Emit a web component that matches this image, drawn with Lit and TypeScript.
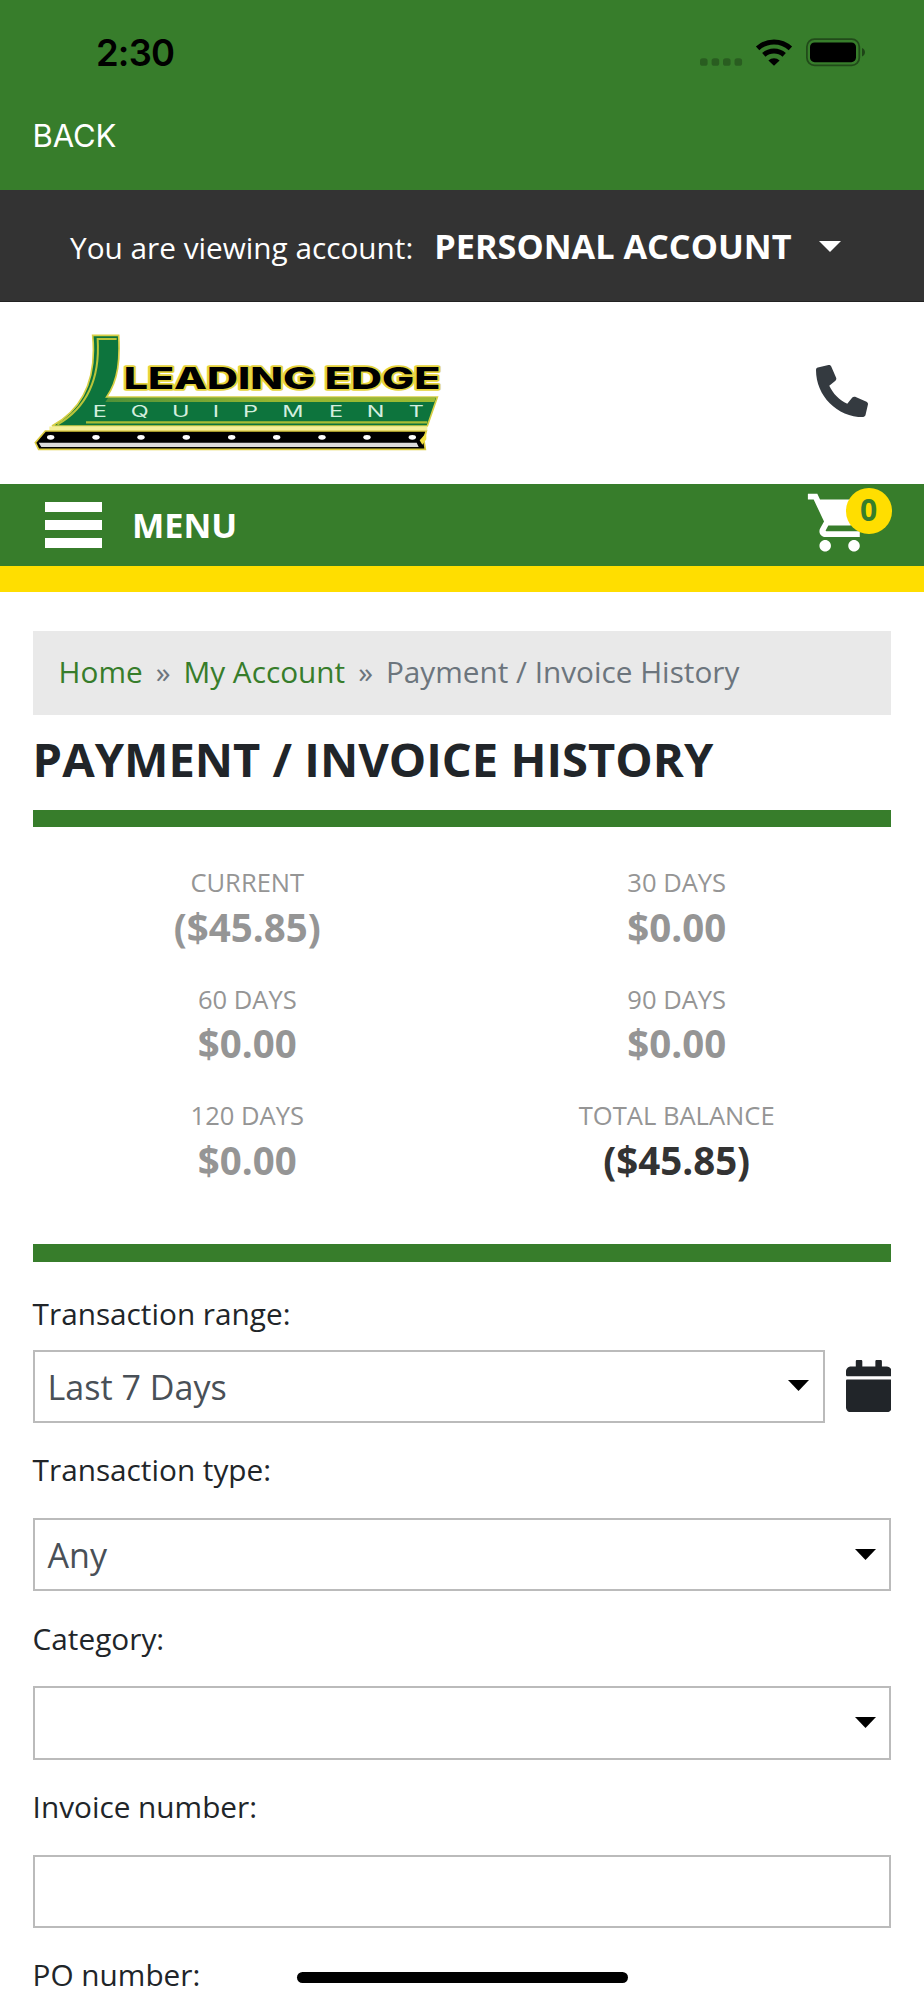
import { LitElement, html, css, svg } from "lit";
import { customElement, property } from "lit/decorators.js";

const SANS = css`"Open Sans", "Noto Sans", sans-serif`;

@customElement("status-bar")
class StatusBar extends LitElement {
  static styles = css`
    :host { display: block; background: #377d2b; height: 190px; font-family: "Inter", "Liberation Sans", sans-serif; }
    .row { display: flex; justify-content: space-between; align-items: flex-start; padding: 30px 58px 0 96px; height: 74px; box-sizing: border-box; }
    .time { font-size: 36.400px; line-height: 46px; font-weight: 600; color: #000; letter-spacing: -0.8px; }
    .icons { display: block; margin-top: 6px; }
    .back { display: block; padding: 41px 0 0 32.600px; font-size: 31px; line-height: 42px; color: #fff; letter-spacing: -0.150px; }
  `;
  render() {
    return html`
      <div class="row">
        <span class="time">2:30</span>
        <svg class="icons" width="170" height="34" viewBox="0 0 170 34">
          <g fill="#000" fill-opacity=".25">
            ${[4, 15.6, 27, 38.5].map((x) => svg`<rect x=${x} y="22.2" width="7.6" height="7.6" rx="2.6"/>`)}
          </g>
          <g fill="none" stroke="#000" stroke-width="5">
            <path d="M61.6 12.4a24 24 0 0 1 32.8 0"/>
            <path d="M67.8 18.8a15.3 15.3 0 0 1 20.4 0"/>
          </g>
          <path d="M72.4 24.4a8.6 8.6 0 0 1 11.2 0L78 29.8z" fill="#000"/>
          <rect x="110.9" y="3.2" width="52.4" height="26.2" rx="7.6" fill="none" stroke="#000" stroke-opacity=".4" stroke-width="1.8"/>
          <rect x="114" y="6.4" width="46" height="19.8" rx="4.6" fill="#000"/>
          <path d="M166 12c4 1.500 4 7.100 0 8.600z" fill="#000" fill-opacity=".45"/>
        </svg>
      </div>
      <span class="back">BACK</span>
    `;
  }
}

@customElement("account-bar")
class AccountBar extends LitElement {
  static styles = css`
    :host { display: flex; align-items: baseline; box-sizing: border-box; height: 112px; padding: 30px 0 0 70px; background: #333; border-bottom: 1px solid #222; color: #fff; font-family: ${SANS}; line-height: 52px; white-space: nowrap; }
    .lead { font-size: 29.750px; }
    .name { font-size: 34.250px; font-weight: 700; margin-left: 21px; }
    .caret { width: 22px; height: 11px; margin-left: 27px; align-self: flex-start; margin-top: 21px; }
  `;
  render() {
    return html`
      <span class="lead">You are viewing account:</span>
      <span class="name">PERSONAL ACCOUNT</span>
      <svg class="caret" viewBox="0 0 22 11"><path d="M0 0h22L11 11z" fill="#fff"/></svg>
    `;
  }
}

@customElement("site-header")
class SiteHeader extends LitElement {
  static styles = css`
    :host { display: flex; justify-content: space-between; align-items: flex-start; box-sizing: border-box; height: 182px; padding: 18px 56px 0 20px; background: #fff; }
    .phone { width: 52px; height: 52px; margin-top: 45px; transform: scaleX(-1); }
    .wordmark { font-family: "Inter", "Liberation Sans", sans-serif; font-weight: 800; font-size: 90px; }
    .sub { font-family: "Inter", "Liberation Sans", sans-serif; font-weight: 400; font-size: 47px; fill: #d4eede; }
  `;
  render() {
    const letters: [string, number][] = [["E", 223], ["Q", 337], ["U", 461], ["I", 583], ["P", 674], ["M", 792], ["E", 932], ["N", 1045], ["T", 1171]];
    return html`
      <svg width="440" height="150" viewBox="0 0 1320 450">
        <defs>
          <linearGradient id="edge" x1="0" x2="1"><stop offset="0" stop-color="#4f9138"/><stop offset=".5" stop-color="#96b531"/><stop offset="1" stop-color="#9dbb33"/></linearGradient>
        </defs>
        <path d="M218 46H296C300 115 296 180 260 231H1252L1222 318H96C180 272 232 190 218 46z" fill="#0d743d" stroke="#d7cf45" stroke-width="5"/>
        <path d="M290 57H233C240 170 205 260 112 314" fill="none" stroke="#b9c43a" stroke-width="6"/>
        <path d="M264 234H1247L1243 246H256z" fill="url(#edge)"/>
        <path d="M198 307H1222" stroke="#a9bd35" stroke-width="7"/>
        <path d="M88 325H1222" stroke="#f5ef9a" stroke-width="11"/>
        <path d="M76 333H1219L1211 357L1216 388H56L46 368z" fill="#000" stroke="#dccb3d" stroke-width="5"/>
        <path d="M56 368H1190L1196 381H64z" fill="#dcdcdc"/>
        <path d="M1219 338L1199 361L1207 374L1219 358z" fill="#f2df42"/>
        ${[92, 228, 363, 499, 635, 770, 906, 1041, 1177].map((x) => svg`<ellipse cx=${x} cy="352" rx="11" ry="7" fill="#fff"/>`)}
        <text class="wordmark" x="311" y="206" textLength="950" lengthAdjust="spacingAndGlyphs" fill="#000" stroke="#e6d43c" stroke-width="10" stroke-linejoin="round" paint-order="stroke">LEADING EDGE</text>
        ${letters.map(([c, x]) => svg`<text class="sub" transform="translate(${x - 5} 291) scale(1.5 1)">${c}</text>`)}
      </svg>
      <svg class="phone" viewBox="0 0 512 512"><path fill="#343a40" d="M493.4 24.6l-104-24c-11.3-2.6-22.9 3.3-27.5 13.9l-48 112c-4.2 9.8-1.4 21.300 6.900 28l60.600 49.600c-36 76.700-98.900 140.500-177.200 177.200l-49.600-60.600c-6.800-8.300-18.200-11.100-28-6.900l-112 48C3.900 366.500-2 378.100.6 389.400l24 104C27.100 504.200 36.700 512 48 512c256.100 0 464-207.500 464-464 0-11.200-7.700-20.900-18.600-23.400z"/></svg>
    `;
  }
}

@customElement("menu-bar")
class MenuBar extends LitElement {
  static styles = css`
    :host { display: flex; align-items: flex-start; box-sizing: border-box; height: 108px; background: #377d2b; border-bottom: 26px solid #ffde00; color: #fff; font-family: ${SANS}; padding: 0 32px 0 45px; }
    .burger { display: flex; flex-direction: column; gap: 8px; margin-top: 18px; width: 57px; }
    .burger i { height: 10px; background: #fff; }
    .label { flex: 1; margin-left: 30px; font-size: 34.250px; font-weight: 700; line-height: 82px; }
    .cart { position: relative; width: 87px; height: 82px; }
    .glyph { display: block; width: 69.200px; height: 69.200px; margin-top: 4.200px; }
    .badge { position: absolute; top: 4px; right: 0.500px; width: 45.600px; height: 45.600px; border-radius: 50%; background: #ffde00; color: #377d2b; font-size: 30.080px; font-weight: 700; line-height: 43px; text-align: center; }
  `;
  render() {
    return html`
      <div class="burger"><i></i><i></i><i></i></div>
      <span class="label">MENU</span>
      <div class="cart">
        <svg class="glyph" viewBox="0 0 24 24"><path fill="#fff" d="M7 18c-1.100 0-1.990.9-1.990 2S5.900 22 7 22s2-.9 2-2-.9-2-2-2zM1 2v2h2l3.600 7.590-1.350 2.450c-.16.28-.25.61-.25.96 0 1.100.9 2 2 2h12v-2H7.420c-.14 0-.25-.11-.25-.25l.03-.12.9-1.630h7.450c.75 0 1.410-.41 1.750-1.030l3.580-6.490c.08-.14.12-.31.12-.48 0-.55-.45-1-1-1H5.210l-.94-2H1zm16 16c-1.100 0-1.990.9-1.990 2s.89 2 1.990 2 2-.9 2-2-.9-2-2-2z"/></svg>
        <span class="badge">0</span>
      </div>
    `;
  }
}

@customElement("form-field")
class FormField extends LitElement {
  @property() label = "";
  @property() value = "";
  @property({ type: Boolean }) select = false;
  @property({ type: Boolean }) calendar = false;
  static styles = css`
    :host { display: block; margin-bottom: 27.500px; font-family: ${SANS}; }
    .label { display: block; font-size: 29.750px; line-height: 40px; color: #212529; margin-bottom: 27.700px; }
    .tight { margin-bottom: 16px; }
    .line { display: flex; align-items: flex-start; }
    .box { flex: 1; display: flex; justify-content: space-between; box-sizing: border-box; height: 73.200px; border: 2px solid #bbb; background: #fff; padding: 0 13.500px 0 13px; font-size: 34.050px; line-height: 70px; color: #495057; }
    .caret { width: 21px; height: 11px; margin-top: 28.700px; }
    .cal { width: 45.700px; height: 52.300px; margin: 10.500px 0 0 21px; }
  `;
  render() {
    return html`
      <span class="label ${this.calendar ? "tight" : ""}">${this.label}</span>
      <div class="line">
        <div class="box">
          <span>${this.value}</span>
          ${this.select ? html`<svg class="caret" viewBox="0 0 21 11"><path d="M0 0h21L10.500 11z"/></svg>` : ""}
        </div>
        ${this.calendar ? html`<svg class="cal" viewBox="0 0 448 512" preserveAspectRatio="none"><path fill="#212529" d="M12 192h424c6.600 0 12 5.400 12 12v260c0 26.500-21.500 48-48 48H48c-26.500 0-48-21.500-48-48V204c0-6.600 5.400-12 12-12zm436-44v-36c0-26.500-21.500-48-48-48h-48V12c0-6.600-5.400-12-12-12h-40c-6.600 0-12 5.400-12 12v52H160V12c0-6.600-5.400-12-12-12h-40c-6.600 0-12 5.400-12 12v52H48C21.500 64 0 85.500 0 112v36c0 6.600 5.400 12 12 12h424c6.600 0 12-5.400 12-12z"/></svg>` : ""}
      </div>
    `;
  }
}

@customElement("app-root")
class AppRoot extends LitElement {
  static styles = css`
    :host { display: block; position: relative; height: 2000px; overflow: hidden; background: #fff; font-family: ${SANS}; color: #212529; }
    .page { padding: 39px 32.600px 0; }
    .crumbs { display: flex; height: 84px; line-height: 82px; background: #e9e9e9; padding-left: 26px; font-size: 29.750px; color: #6c757d; white-space: nowrap; }
    .link { color: #377d2b; }
    .sep { margin: 0 13px; }
    .title { margin: 16px 0 23px; font-size: 47.100px; line-height: 56px; font-weight: 700; white-space: nowrap; }
    .rule { height: 17.200px; background: #377d2b; }
    .summary { display: grid; grid-template-columns: 1fr 1fr; row-gap: 27.300px; padding: 35.800px 0 58.800px; text-align: center; color: #959595; }
    .term { font-size: 25.550px; line-height: 38.700px; }
    .sum { font-size: 38.450px; line-height: 50.650px; font-weight: 700; }
    .total { color: #333; }
    .form { padding-top: 32px; }
    .indicator { position: absolute; left: 297px; top: 1971.500px; width: 331px; height: 11px; border-radius: 6px; background: #000; }
  `;
  private balances: [string, string][] = [
    ["CURRENT", "($45.85)"], ["30 DAYS", "$0.00"], ["60 DAYS", "$0.00"],
    ["90 DAYS", "$0.00"], ["120 DAYS", "$0.00"], ["TOTAL BALANCE", "($45.85)"],
  ];
  render() {
    return html`
      <status-bar></status-bar>
      <account-bar></account-bar>
      <site-header></site-header>
      <menu-bar></menu-bar>
      <main class="page">
        <nav class="crumbs">
          <span class="link">Home</span><span class="sep">»</span><span class="link">My Account</span><span class="sep">»</span><span>Payment / Invoice History</span>
        </nav>
        <h1 class="title">PAYMENT / INVOICE HISTORY</h1>
        <div class="rule"></div>
        <section class="summary">
          ${this.balances.map(([t, v]) => html`<div><div class="term">${t}</div><div class="sum ${t === "TOTAL BALANCE" ? "total" : ""}">${v}</div></div>`)}
        </section>
        <div class="rule"></div>
        <section class="form">
          <form-field label="Transaction range:" value="Last 7 Days" select calendar></form-field>
          <form-field label="Transaction type:" value="Any" select></form-field>
          <form-field label="Category:" select></form-field>
          <form-field label="Invoice number:"></form-field>
          <form-field label="PO number:"></form-field>
        </section>
      </main>
      <div class="indicator"></div>
    `;
  }
}
